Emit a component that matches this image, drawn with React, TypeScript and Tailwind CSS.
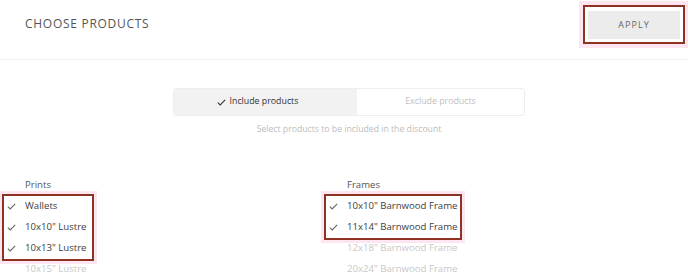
import React from "react";

type Item = { name: string; checked: boolean };

const prints: Item[] = [
  { name: "Wallets", checked: true },
  { name: "10x10\" Lustre", checked: true },
  { name: "10x13\" Lustre", checked: true },
  { name: "10x15\" Lustre", checked: false },
];

const frames: Item[] = [
  { name: "10x10\" Barnwood Frame", checked: true },
  { name: "11x14\" Barnwood Frame", checked: true },
  { name: "12x18\" Barnwood Frame", checked: false },
  { name: "20x24\" Barnwood Frame", checked: false },
];

function Check({ className = "" }: { className?: string }) {
  return (
    <svg viewBox="0 0 10 8" className={`w-[9px] h-[7px] ${className}`} fill="none" stroke="currentColor" strokeWidth="1.2">
      <path d="M0.8 4.2l2.7 2.6L9.2 0.9" />
    </svg>
  );
}

function Row({ item }: { item: Item }) {
  return (
    <div className="flex items-center h-[21px] whitespace-nowrap">
      <span className="w-[18px] flex items-center text-[#666]">{item.checked && <Check />}</span>
      <span className={item.checked ? "text-[#3d3d3d]" : "text-[#c8c8c8]"}>{item.name}</span>
    </div>
  );
}

function Column({ title, items, boxWidth }: { title: string; items: Item[]; boxWidth: string }) {
  const checked = items.filter(i => i.checked);
  const rest = items.filter(i => !i.checked);
  return (
    <div className="flex flex-col">
      <div className="pl-[18px] h-[21px] flex items-center text-[#555]">{title}</div>
      <div className={`${boxWidth} -ml-[3px] pl-[3px] outline-2 outline-[#8e3322] shadow-[0_0_0_5px_#fde6f1]`}>
        {checked.map(i => <Row key={i.name} item={i} />)}
      </div>
      {rest.map(i => <Row key={i.name} item={i} />)}
    </div>
  );
}

export default function App() {
  return (
    <div className="w-[688px] h-[279px] bg-white overflow-hidden" style={{ fontFamily: "'Open Sans', sans-serif" }}>
      {/* Header */}
      <div className="h-[60px] border-b border-[#f3f3f3] flex items-start justify-between">
        <h1 className="pl-[25px] pt-[15px] text-[12px] tracking-[0.06em] text-[#555]">CHOOSE PRODUCTS</h1>
        <div className="mt-[5px] mr-[3px] p-[5px] outline-2 -outline-offset-2 outline-[#8e3322] shadow-[0_0_0_4px_#fde6f1]">
          <button className="w-[92px] h-[28px] bg-[#ececec] text-[9px] tracking-[0.12em] text-[#666]">APPLY</button>
        </div>
      </div>

      {/* Include / exclude toggle */}
      <div className="flex justify-center pt-[28px] pl-[10px]">
        <div className="w-[352px] h-[28px] flex border border-[#eeeeee] rounded-[3px] overflow-hidden text-[8.8px]">
          <div className="flex-1 bg-[#f2f2f2] flex items-center justify-center gap-[4px] pr-[16px] text-[#333]">
            <Check className="text-[#333]" />
            Include products
          </div>
          <div className="flex-1 flex items-center justify-center text-[#c0c0c0]">Exclude products</div>
        </div>
      </div>
      <p className="text-center text-[8.7px] text-[#bdbdbd] mt-[7px] pl-[10px]">Select products to be included in the discount</p>

      {/* Product lists */}
      <div className="flex pl-[7px] pt-[39px] text-[9.6px]">
        <div className="w-[322px]">
          <Column title="Prints" items={prints} boxWidth="w-[88px]" />
        </div>
        <Column title="Frames" items={frames} boxWidth="w-[134px]" />
      </div>
    </div>
  );
}
